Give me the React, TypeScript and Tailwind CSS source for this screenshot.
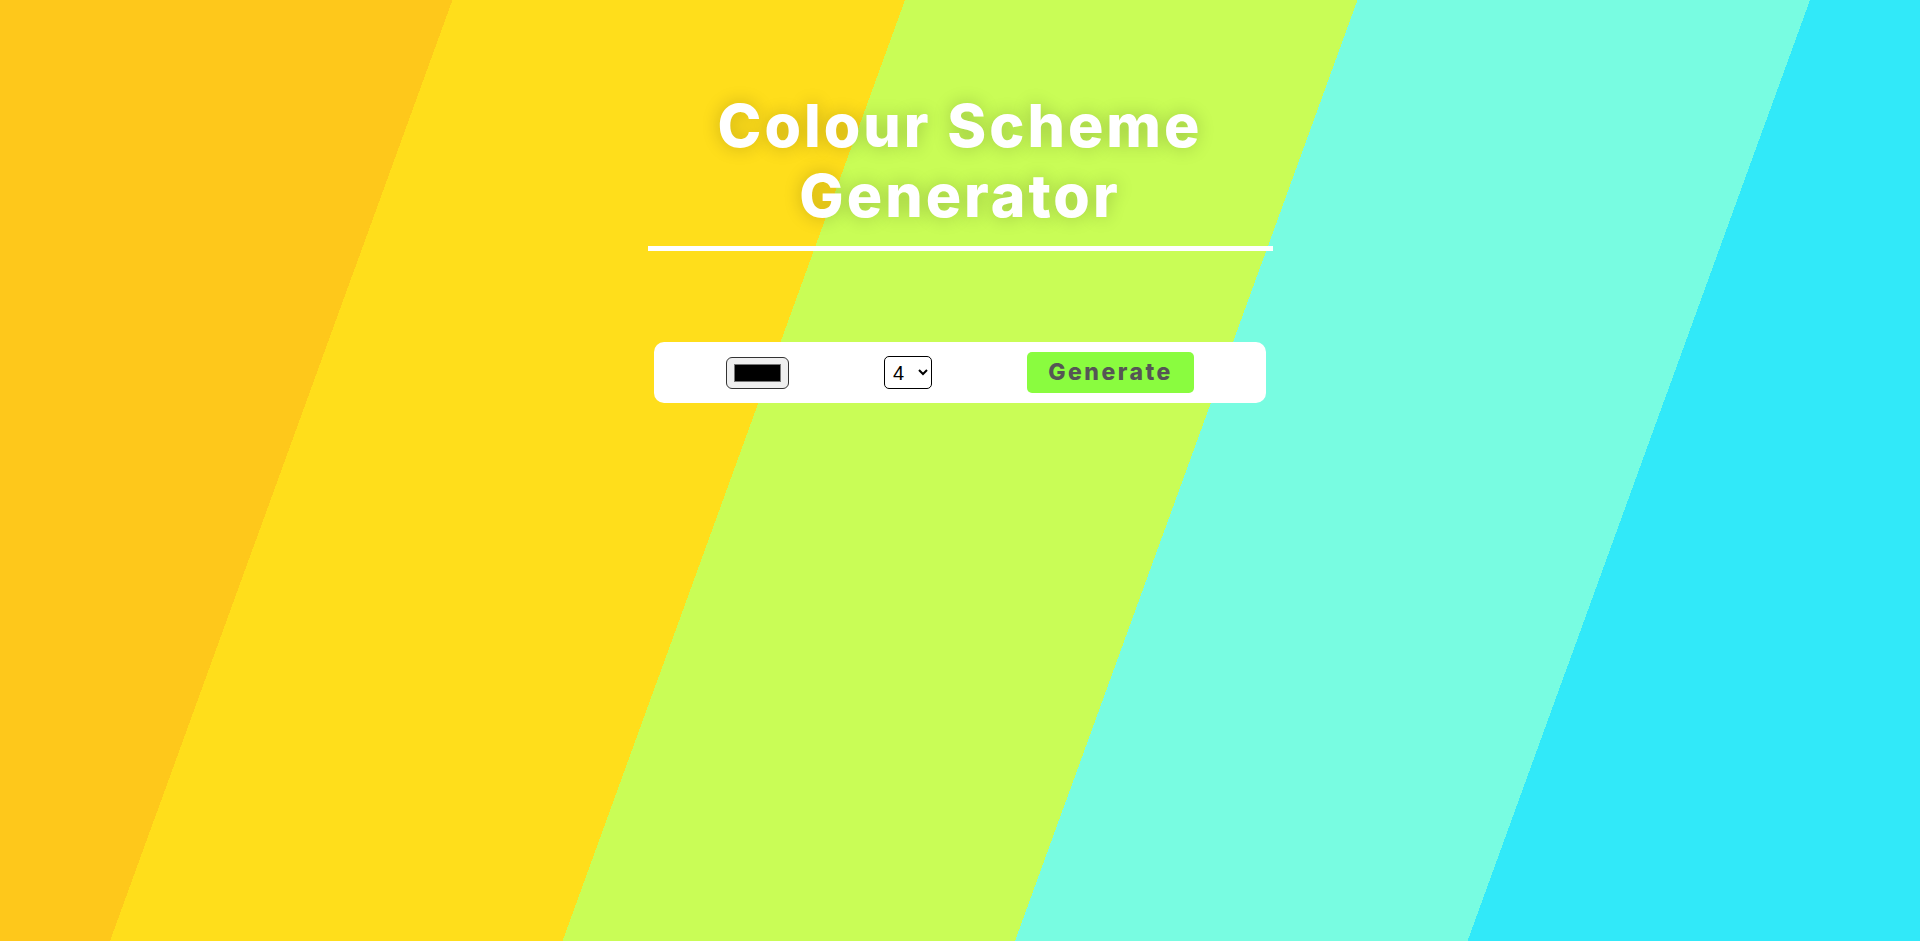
import React, { useState } from 'react';

const App: React.FC = () => {
  const [colour, setColour] = useState('#000000');
  const [count, setCount] = useState('4');

  return (
    <div className="min-h-screen w-full flex flex-col items-center pt-[91px] bg-[linear-gradient(110deg,#fec81b_0_20%,#ffde1b_20%_40%,#c9fd56_40%_60%,#78fce1_60%_80%,#31e9f9_80%_100%)] font-['Inter','Liberation_Sans',sans-serif]">
      {/* Heading */}
      <h1 className="text-center text-white font-extrabold text-[59px] leading-[70px] tracking-[3px] [text-shadow:0_0_18px_rgba(0,0,0,0.22)]">
        Colour Scheme
        <br />
        Generator
      </h1>
      <div className="mt-[15px] w-[625px] h-[5px] bg-white" />

      {/* Controls */}
      <form
        className="mt-[91px] w-[612px] h-[61px] bg-white rounded-[10px] flex items-center pl-[72px]"
        onSubmit={(e) => e.preventDefault()}
      >
        <input
          type="color"
          value={colour}
          onChange={(e) => setColour(e.target.value)}
          className="w-[63px] h-[32px] bg-[#efefef] border border-[#333] rounded-[6px] px-[5px] py-[2px] cursor-pointer"
        />
        <select
          value={count}
          onChange={(e) => setCount(e.target.value)}
          className="ml-[95px] w-[48px] h-[33px] border border-black rounded-[5px] bg-white text-black text-[20px] pl-[4px] font-['Liberation_Sans',sans-serif]"
        >
          <option value="3">3</option>
          <option value="4">4</option>
          <option value="5">5</option>
          <option value="6">6</option>
        </select>
        <button
          type="submit"
          className="ml-[95px] w-[167px] h-[41px] bg-[#8afc3f] rounded-[5px] text-[#555555] font-extrabold text-[23px] tracking-[2.5px]"
        >
          Generate
        </button>
      </form>
    </div>
  );
};

export default App;
